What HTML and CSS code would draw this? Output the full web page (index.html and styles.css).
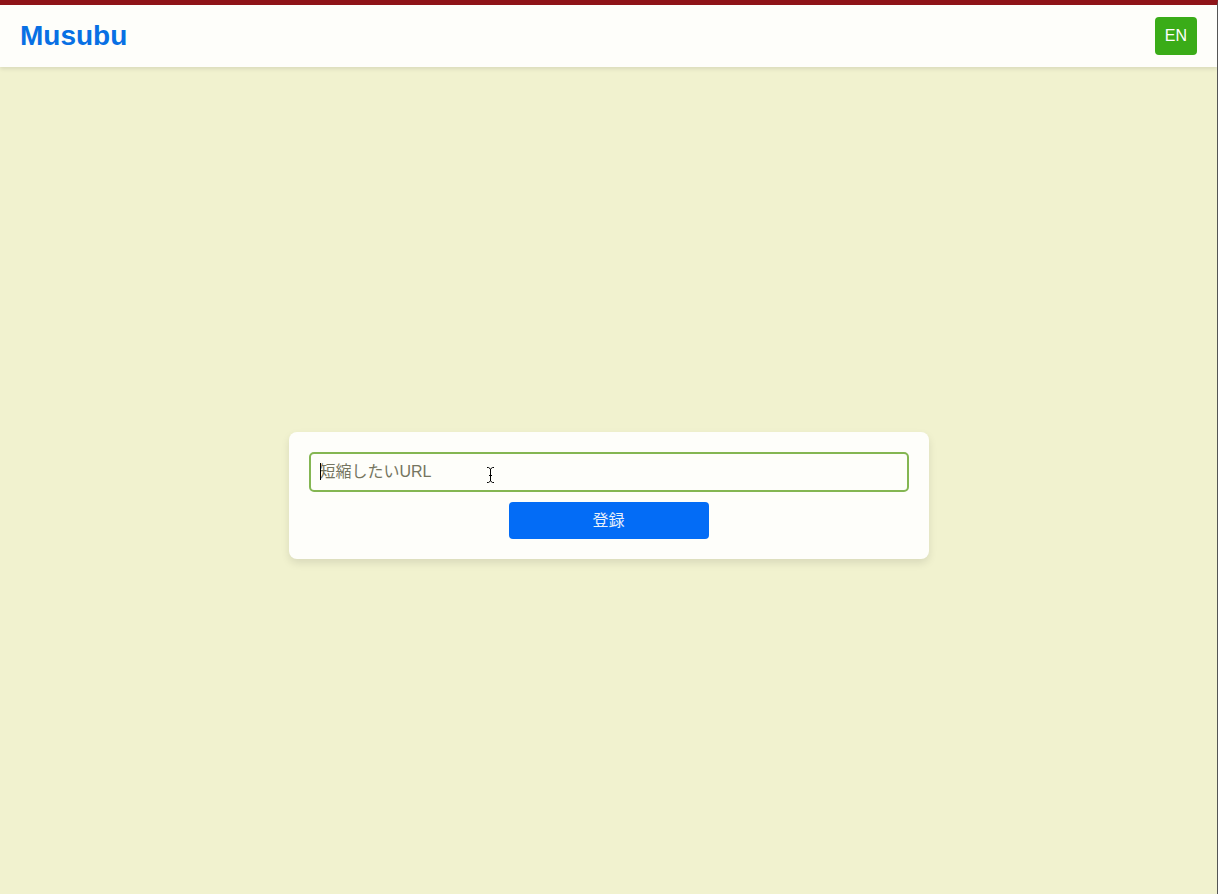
FILE: index.html
```html
<!DOCTYPE html>
<html lang="ja">
<head>
    <meta charset="UTF-8">
    <meta name="viewport" content="width=device-width, initial-scale=1.0">
    <title>Musubu</title>
    <link rel="stylesheet" href="styles.css">
</head>
<body>
    <header class="header">
        <h1 class="logo">Musubu</h1>
        <button type="button" class="lang-button">EN</button>
    </header>
    <main class="main">
        <form class="url-form">
            <div class="field">
                <input type="url" id="url" class="url-input" placeholder="短縮したいURL" aria-label="短縮したいURL" autofocus>
                <span class="caret"></span>
                <svg class="pointer" width="9" height="16" viewBox="0 0 9 16" fill="none" stroke="#000" aria-hidden="true">
                    <path d="M1 .5h1.500l2 1.500 2-1.500H8M4.500 2v12M1 15.500h1.500l2-1.500 2 1.500H8M3 8.500h3"/>
                </svg>
            </div>
            <button type="submit" class="submit-button">登録</button>
        </form>
    </main>
</body>
</html>
```

FILE: styles.css
```css
* {
    box-sizing: border-box;
}
body {
    display: flex;
    flex-direction: column;
    min-height: 100vh;
    margin: 0;
    border-top: 5px solid #8f1418;
    border-right: 1px solid #555;
    background-color: #f1f2cf;
    font-family: "Liberation Sans", "Noto Sans CJK JP", sans-serif;
}
.header {
    display: flex;
    justify-content: space-between;
    align-items: center;
    padding: 12px 20px;
    background-color: #fefefa;
    box-shadow: 0 2px 4px rgba(0, 0, 0, 0.1);
}
.logo {
    margin: 0;
    color: #0870e4;
    font-size: 28px;
    line-height: 32px;
}
.lang-button {
    height: 38px;
    padding: 0 10px;
    border: none;
    border-radius: 4px;
    background-color: #3aac18;
    color: #fff;
    font: inherit;
    font-size: 16px;
    cursor: pointer;
}
.main {
    display: flex;
    flex: 1;
    justify-content: center;
    align-items: center;
    padding: 30px 20px 0;
}
.url-form {
    display: flex;
    flex-direction: column;
    align-items: center;
    gap: 10px;
    width: 100%;
    max-width: 640px;
    padding: 20px;
    border-radius: 8px;
    background-color: #fefefa;
    box-shadow: 0 4px 8px rgba(0, 0, 0, 0.1);
}
.field {
    position: relative;
    width: 100%;
}
.url-input {
    display: block;
    width: 100%;
    height: 40px;
    padding: 0 9px;
    border: 2px solid #84b652;
    border-radius: 5px;
    outline: none;
    background-color: transparent;
    caret-color: transparent;
    font: inherit;
    font-size: 16px;
}
.url-input::placeholder {
    color: #757560;
}
.caret {
    position: absolute;
    top: 11px;
    left: 11px;
    width: 1px;
    height: 17px;
    background-color: #000;
}
.pointer {
    position: absolute;
    top: 15px;
    left: 177px;
}
.submit-button {
    width: 200px;
    height: 37px;
    padding: 0 10px 4px;
    border: none;
    border-radius: 4px;
    background-color: #036cf6;
    color: #e8f0fa;
    font: inherit;
    font-size: 16px;
    cursor: pointer;
}
```
